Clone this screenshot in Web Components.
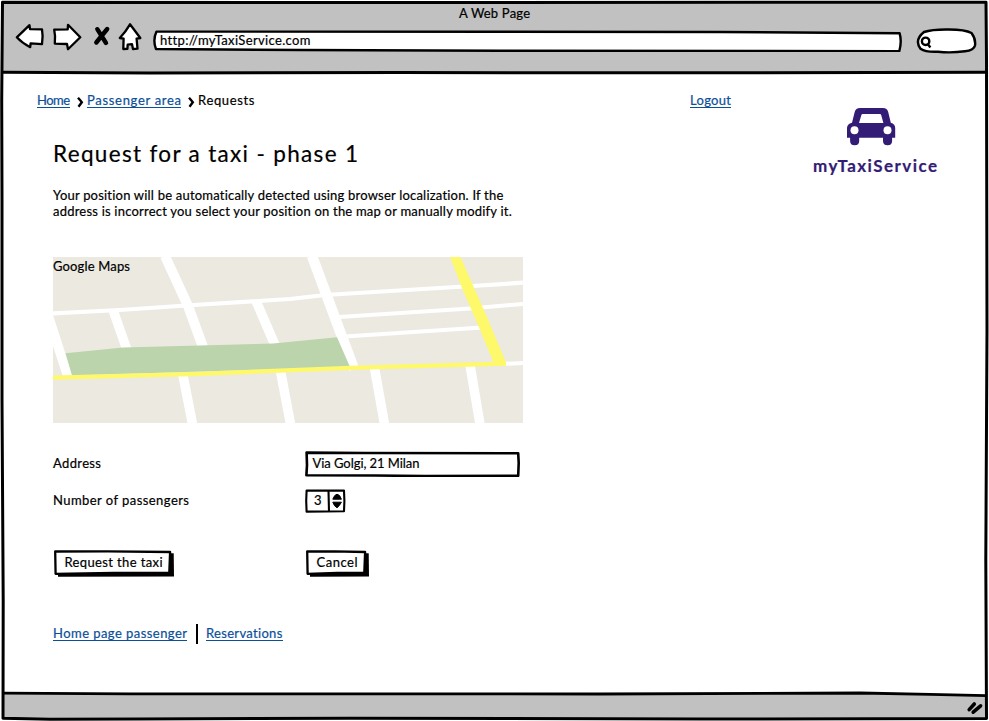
<!DOCTYPE html>
<html lang="en">
<head>
<meta charset="utf-8">
<title>myTaxiService</title>
<style>
html,body{margin:0;width:989px;height:721px;overflow:hidden;background:#fff}
body{font:13px/16px Lato,"Open Sans",sans-serif;color:#000}
</style>
</head>
<body>
<sk-window></sk-window>
<script>
const define = (name, html, after) => customElements.define(name, class extends HTMLElement {
  connectedCallback() {
    if (!this.shadowRoot) this.attachShadow({mode:'open'}).innerHTML = html;
    if (after) after(this, this.shadowRoot);
  }
});

define('sk-window', `
<style>
:host{display:grid;grid-template-rows:74px 620px 27px;width:989px;height:721px;position:relative}
.frame{position:absolute;inset:0;pointer-events:none}
</style>
<svg class="frame" width="989" height="721" fill="none" stroke="#000" stroke-linejoin="round">
<path d="M3 3L986 3L986 72L3 72ZM3 693L500 693L860 693L986 696L986 718L3 718Z" fill="#c1c1c1" stroke="none"/>
<path d="M2.5 2.3L330 2.5L986 2.3L986.5 60L987 330L985.8 560L986.5 718.6L700 719L350 718.2L140 719L50 719.2L3 718.3L3.2 600L2 400L2 200L1.7 100Z" stroke-width="3"/>
<path d="M3 72.2L150 72.9L400 72.6L700 72.8L987 72.2" stroke-width="3"/>
<path d="M3 693.2L130 693.8L600 694L860 693L930 694.3L986 695.6" stroke-width="2.8"/>
</svg>
<sk-toolbar></sk-toolbar><sk-page></sk-page><sk-statusbar></sk-statusbar>`);

define('sk-toolbar', `
<style>
:host{display:grid;grid-template-rows:16px 1fr;padding-top:5px;box-sizing:border-box;position:relative}
.title{display:flex;justify-content:center}
.row{display:flex;align-items:flex-start;padding-left:15px;margin-top:2px}
.nav{width:128px;height:30px;flex:none}
sk-url{margin:7px 0 0 10px}
sk-search{margin:5px 0 0 14px}
</style>
<div class="title"><sk-text w="71">A Web Page</sk-text></div>
<div class="row">
<svg class="nav" viewBox="15 23 128 30" fill="#fff" stroke="#000" stroke-width="2.3" stroke-linejoin="round">
<path d="M16.8 37.3L29.5 25.2L30 29.2L42 29.3L42.6 36L42 44.2L30.6 43.4L30.2 47.2Q22 43 16.8 37.3Z"/>
<path d="M54.2 29.7L67.7 29.4L68 24.8L80.3 37.2L68 49.3L67 44L54.8 43.6Q55.7 36 54.2 29.7Z"/>
<path d="M97.3 29.2L106 43M107.2 29L96.3 42.5" stroke-width="4.4" stroke-linecap="round"/>
<path d="M130 24.3L140.3 38L136.6 38.6L137.5 48.6L133 49L132 44.2L127.7 44.6L127.4 48.8L123.3 49L123.6 38.6L119.8 38Q125.5 32 130 24.3Z"/>
</svg>
<sk-url></sk-url><sk-search></sk-search>
</div>`);

define('sk-url', `
<style>
:host{display:flex;position:relative;width:749px;height:22px;padding:2px 0 0 7px;box-sizing:border-box}
svg{position:absolute;inset:0}sk-text{position:relative}
</style>
<svg width="749" height="22" viewBox="153 30 749 22" fill="#fff" stroke="#000" stroke-width="2.4" stroke-linejoin="round"><path d="M156.5 31.6L500 31.8L720 32L899.6 33.2Q902 41.5 899.3 51.2L500 50.8L300 50L156 49Q152.5 40 156.5 31.6Z"/></svg>
<sk-text w="150">http://myTaxiService.com</sk-text>`);

define('sk-search', `
<style>:host{display:block;width:61px;height:26px}svg{display:block}</style>
<svg width="61" height="26" viewBox="916 28 61 26" fill="#fff" stroke="#000" stroke-width="2.4" stroke-linejoin="round">
<path d="M924 32Q932 29.3 948 29.5Q965 29.4 971.5 33Q976 39 975 45.5Q973.8 50.5 965 51.2Q951 53.2 938 51.7Q926 52.4 920.5 48.7Q914 40 924 32Z"/>
<circle cx="925.6" cy="41.3" r="3.7"/><path d="M927.5 43.8L930.4 47.4"/></svg>`);

define('sk-page', `
<style>
:host{display:flex;align-items:flex-start;padding:18px 0 0 37px;box-sizing:border-box;position:relative}
.left{width:653px;flex:none}
.content{padding:32px 0 0 16px}
.copy{margin:19px 0 38px;display:grid;grid-template-rows:16px 16px}
sk-request-form{margin-top:28px}
.links{display:flex;margin-top:47px}
.divider{width:2px;height:20px;margin:-1px 8px 0 9px;background:#000}
h1{font-size:22.5px;font-weight:400;line-height:28px;margin:0;height:28px}
sk-logo{margin:16px 0 0 82px}
</style>
<div class="left">
<sk-breadcrumbs></sk-breadcrumbs>
<div class="content">
<h1><sk-text w="305">Request for a taxi - phase 1</sk-text></h1>
<div class="copy"><sk-text w="451">Your position will be automatically detected using browser localization. If the</sk-text><sk-text w="459">address is incorrect you select your position on the map or manually modify it.</sk-text></div>
<sk-map></sk-map>
<sk-request-form></sk-request-form>
<div class="links"><sk-link><sk-text w="134">Home page passenger</sk-text></sk-link><div class="divider"></div><sk-link><sk-text w="76.5">Reservations</sk-text></sk-link></div>
</div></div>
<sk-link><sk-text w="41">Logout</sk-text></sk-link>
<sk-logo></sk-logo>`);

define('sk-link', `
<style>:host{display:block;height:15px;border-bottom:1px solid #0b4f99;color:#0b4f99;flex:none}</style><slot></slot>`);

define('sk-breadcrumbs', `
<style>:host{display:flex;height:16px}svg{margin:5px 3px 0 7px;flex:none;width:7px;height:11px}</style>
<sk-link><sk-text w="33">Home</sk-text></sk-link>
<svg viewBox="0 0 7 11"><path d="M1 .8Q3 3 4.8 5.2Q3.5 7 1.5 9.7" fill="none" stroke="#000" stroke-width="2.4"/></svg>
<sk-link><sk-text w="94">Passenger area</sk-text></sk-link>
<svg viewBox="0 0 7 11"><path d="M1 .8Q3 3 4.8 5.2Q3.5 7 1.5 9.7" fill="none" stroke="#000" stroke-width="2.4"/></svg>
<sk-text w="56.5">Requests</sk-text>`);

define('sk-logo', `
<style>:host{display:flex;flex-direction:column;width:124px;color:#331c75;font-weight:700;font-size:17px;line-height:20px}
svg{display:block;margin:0 0 10px 34px}</style>
<svg width="49" height="38" viewBox="847 108 49 38" fill="#331c75">
<path fill-rule="evenodd" d="M860 108H883Q887.2 108 888.2 112L890.8 122.8Q895.2 124 895.2 128V137.8H892.1V141Q892.1 145.2 887.6 145.2Q883 145.2 883 141V137.8H859.2V141Q859.2 145.2 854.7 145.2Q850.1 145.2 850.1 141V137.8H847V128Q847 124 852 122.8L854.7 112Q855.7 108 860 108ZM862.5 114Q861.7 114 861.4 115L859 123H883.4L881.2 115Q880.9 114 880 114Z"/>
<circle cx="854.5" cy="130.3" r="4" fill="#fff"/><circle cx="887.5" cy="130.3" r="4" fill="#fff"/></svg>
<sk-text w="124">myTaxiService</sk-text>`);

define('sk-map', `
<style>:host{display:block;position:relative;width:470px;height:166px;padding-top:1px;box-sizing:border-box}
svg{position:absolute;inset:0}sk-text{position:relative}</style>
<svg width="470" height="166" viewBox="53 257 470 166">
<rect x="53" y="257" width="470" height="166" fill="#ece9e1"/>
<g fill="none" stroke="#fff">
<path d="M53 313.3L120 310L186 305.5L290 299L325 295L456 287L523 282.7" stroke-width="4.2"/>
<path d="M335 317.2L470 308.5L523 304M345 336.5L482 327.5M500 364L523 363" stroke-width="4"/>
<path d="M165 256L188 306L203 347" stroke-width="10"/>
<path d="M312 256L354 369" stroke-width="10.5"/>
<path d="M113 310L127 350M256 301L275 345M48 315L68 377" stroke-width="9.5"/>
<path d="M182.5 373L192.5 424M280.5 371L290.5 424M374.5 368L384.5 424M470 365L480 424" stroke-width="9.5"/>
</g>
<path d="M65.5 353.3L123 347.5L273 343.5L337 337.3L350 367L72 375.5Z" fill="#bbd4ac"/>
<path d="M450 257H460.5L487 317L506 362.5V366H495L478 325L462 288Z" fill="#fdf96b"/>
<path d="M53 377.7L200 373.8L350 367.8L505 363.6" fill="none" stroke="#fdf96b" stroke-width="4.2"/>
</svg>
<sk-text w="77">Google Maps</sk-text>`);

define('sk-request-form', `
<style>
:host{display:grid;grid-template-columns:252px 216px;grid-template-rows:26px 26px 53px;row-gap:11px}
.lab{padding-top:4px}
sk-stepper{margin-top:1px}
sk-button{margin:25px 0 0 1px}
</style>
<div class="lab"><sk-text w="48">Address</sk-text></div><sk-input></sk-input>
<div class="lab"><sk-text w="136">Number of passengers</sk-text></div><sk-stepper></sk-stepper>
<sk-button size="120"><sk-text w="98">Request the taxi</sk-text></sk-button>
<sk-button size="63"><sk-text w="41">Cancel</sk-text></sk-button>`);

define('sk-input', `
<style>:host{display:flex;position:relative;width:215px;height:26px;padding:4px 0 0 7.5px;box-sizing:border-box}
svg{position:absolute;inset:0}sk-text{position:relative}</style>
<svg width="215" height="26" fill="#fff" stroke="#000" stroke-width="2.6"><path d="M1.6 1.6L60 2L213.2 2.2L213.7 12L213.2 24.8L120 25L70 24.5L1.4 24.3L2 14Z" stroke-linejoin="round"/></svg>
<sk-text w="107">Via Golgi, 21 Milan</sk-text>`);

define('sk-stepper', `
<style>:host{display:flex;position:relative;width:41px;height:24px;padding:3px 0 0 9px;box-sizing:border-box}
svg{position:absolute;inset:0}sk-text{position:relative}</style>
<svg width="41" height="24" fill="#fff" stroke="#000" stroke-width="2.1" stroke-linejoin="round"><path d="M1.6 1.5L39 1.6L39.4 12L39 22.2L1.6 22.6L1.2 12ZM23.5 1.5L24 22.5"/>
<path d="M27.8 10.2Q29.5 5.5 32 5.2Q35 5.5 36.4 10.2ZM27.8 13.2H36.4Q34.5 17 32 18.8Q29 17 27.8 13.2Z" fill="#000" stroke-width="1"/></svg>
<sk-text w="8">3</sk-text>`);

define('sk-button', `
<style>:host{display:flex;position:relative;height:28px;padding:4px 0 0 10.5px;box-sizing:border-box}
svg{position:absolute;left:0;top:0}::slotted(*){position:relative}</style>
<svg height="28" fill="none"></svg><slot></slot>`, (el, root) => {
  const w = +el.getAttribute('size'), s = root.querySelector('svg');
  el.style.width = w + 'px';
  s.setAttribute('width', w);
  s.innerHTML = `<path d="M4 3.3L${w-.3} 3.3L${w} 26.5L4 26.8Z" fill="#000"/><path d="M1.2 1.5L${w*.45} 1.3L${w-3.9} 2L${w-4.7} 22.7L${w*.5} 22.9L1.6 23.8Z" fill="#fff" stroke="#000" stroke-width="2.3" stroke-linejoin="round"/>`;
});

define('sk-statusbar', `
<style>:host{display:flex;justify-content:flex-end;align-items:flex-start;padding:7px 5px 0 0;box-sizing:border-box;position:relative}</style>
<svg width="18" height="15" viewBox="966 701 18 15" stroke="#000" stroke-width="3.6" stroke-linecap="round"><path d="M969.2 709.6L974.3 704M973.2 712.2L980.6 705.8"/></svg>`);

/* A single line of text whose tracking is adjusted to fill the width given by "w". */
define('sk-text', `<style>:host{display:block;flex:none}span{display:inline-block;vertical-align:top;white-space:pre;-webkit-text-stroke:.2px currentColor}</style><span><slot></slot></span>`, (el, root) => {
  const w = +el.getAttribute('w'), span = root.querySelector('span');
  el.style.width = w + 'px';
  const n = el.textContent.length;
  if (n > 1) span.style.letterSpacing = ((w - span.getBoundingClientRect().width) / (n - 1)) + 'px';
});
</script>
</body>
</html>
